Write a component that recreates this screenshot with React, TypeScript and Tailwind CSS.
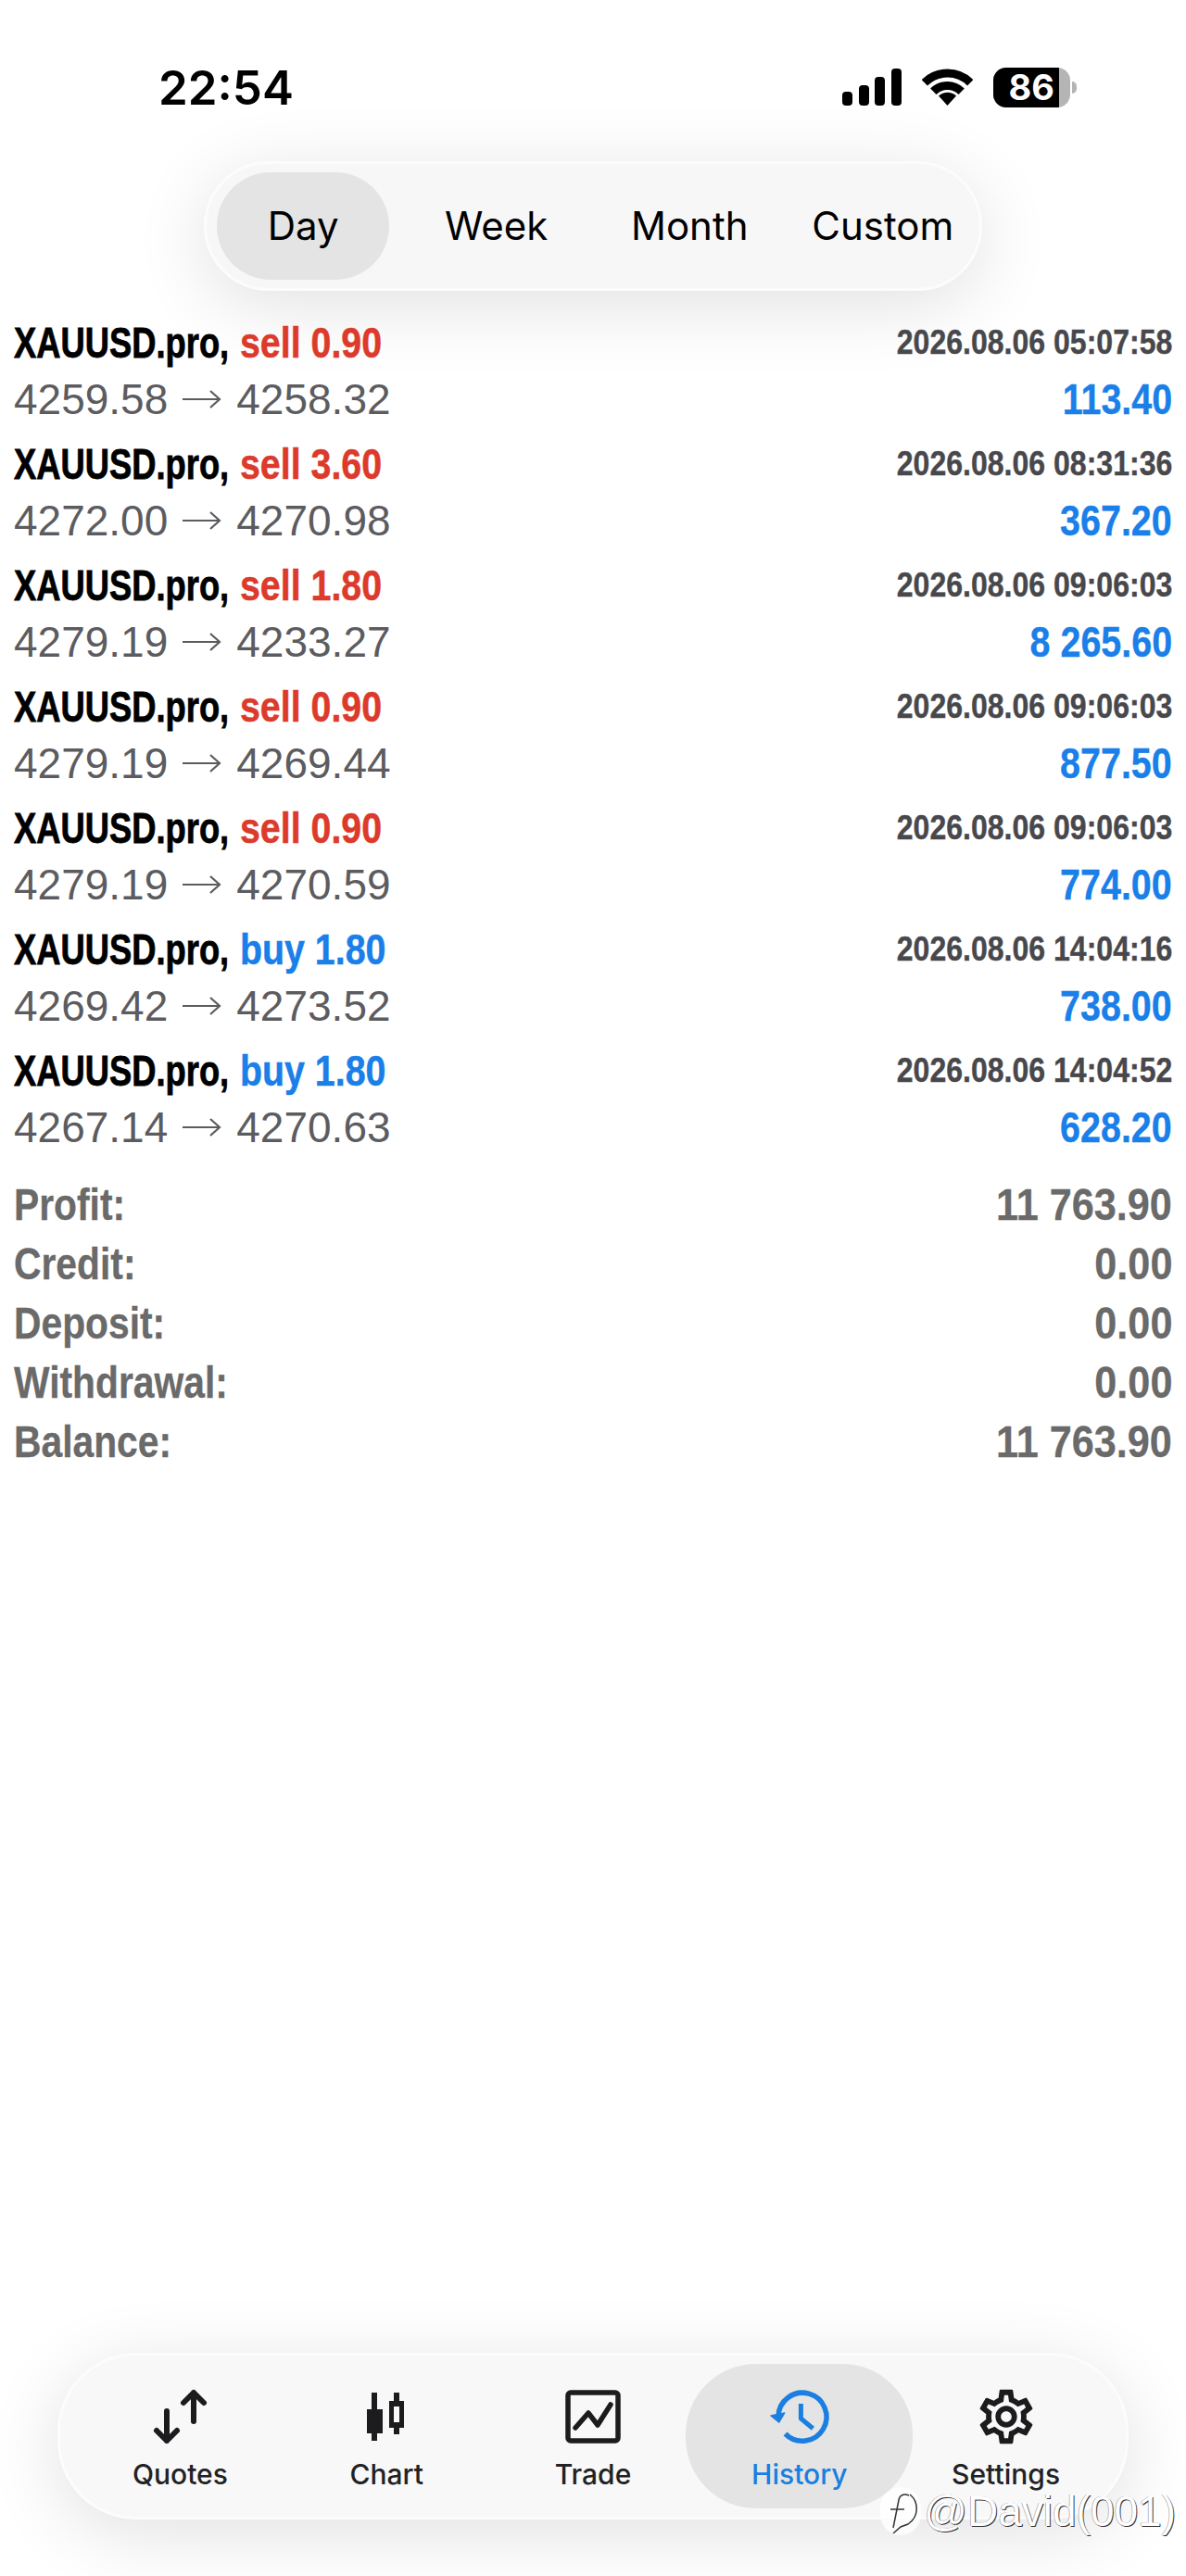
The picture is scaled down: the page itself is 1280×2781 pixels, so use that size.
import { MdOutlineSettings } from "react-icons/md";

const trades = [
  { side: "sell", lots: "0.90", from: "4259.58", to: "4258.32", time: "2026.08.06 05:07:58", profit: "113.40" },
  { side: "sell", lots: "3.60", from: "4272.00", to: "4270.98", time: "2026.08.06 08:31:36", profit: "367.20" },
  { side: "sell", lots: "1.80", from: "4279.19", to: "4233.27", time: "2026.08.06 09:06:03", profit: "8 265.60" },
  { side: "sell", lots: "0.90", from: "4279.19", to: "4269.44", time: "2026.08.06 09:06:03", profit: "877.50" },
  { side: "sell", lots: "0.90", from: "4279.19", to: "4270.59", time: "2026.08.06 09:06:03", profit: "774.00" },
  { side: "buy", lots: "1.80", from: "4269.42", to: "4273.52", time: "2026.08.06 14:04:16", profit: "738.00" },
  { side: "buy", lots: "1.80", from: "4267.14", to: "4270.63", time: "2026.08.06 14:04:52", profit: "628.20" },
];

const summary = [
  { label: "Profit:", value: "11 763.90" },
  { label: "Credit:", value: "0.00" },
  { label: "Deposit:", value: "0.00" },
  { label: "Withdrawal:", value: "0.00" },
  { label: "Balance:", value: "11 763.90" },
];

const QuotesIcon = () => (
  <svg width="64" height="64" viewBox="0 0 64 64" fill="none" stroke="#1c1c1e" strokeWidth="6" strokeLinecap="round" strokeLinejoin="round">
    <path d="M18 26V58M7 47L18 58L29 47" />
    <path d="M47 6V37M36 17L47 6L58 17" />
  </svg>
);

const ChartIcon = () => (
  <svg width="64" height="64" viewBox="0 0 64 64" fill="#1c1c1e">
    <rect x="16" y="6" width="6" height="52" />
    <rect x="11" y="24" width="17" height="26" />
    <path d="M40 6h6v9h5v29h-5v7h-6v-7h-5V15h5zM40 21v17h6V21z" fillRule="evenodd" />
  </svg>
);

const TradeIcon = () => (
  <svg width="64" height="64" viewBox="0 0 64 64" fill="none" stroke="#1c1c1e" strokeWidth="5.5" strokeLinecap="round" strokeLinejoin="round">
    <rect x="5" y="6" width="54" height="52" rx="3" />
    <path d="M13 44L27 28L37 41L51 19" />
  </svg>
);

const HistoryIcon = () => (
  <svg width="70" height="66" viewBox="0 0 70 66" fill="none" stroke="#1a7fe0" strokeWidth="5.5" strokeLinejoin="round">
    <path d="M12 33A26 26 0 1 1 19.5 51.5" />
    <path d="M4 32L18.6 29L12.7 39Z" fill="#1a7fe0" strokeWidth="1.5" />
    <path d="M36.4 19V35L49.4 45.7" strokeWidth="5" />
  </svg>
);

const PriceArrow = () => (
  <svg width="42" height="24" viewBox="0 0 42 24" fill="none" stroke="#5c5c60" strokeWidth="2.2" className="mx-[16px] shrink-0">
    <path d="M0 12H40M30 3L40 12L30 21" />
  </svg>
);

const tabs = [
  { label: "Quotes", icon: <QuotesIcon /> },
  { label: "Chart", icon: <ChartIcon /> },
  { label: "Trade", icon: <TradeIcon /> },
  { label: "History", icon: <HistoryIcon />, active: true },
  { label: "Settings", icon: <MdOutlineSettings size={70} color="#1c1c1e" /> },
];

const StatusIcons = () => (
  <div className="flex items-center gap-[22px]">
    <svg width="64" height="40" viewBox="0 0 64 40" fill="#000">
      <rect x="0" y="25" width="11" height="15" rx="4" />
      <rect x="18" y="18" width="11" height="22" rx="4" />
      <rect x="35" y="9" width="11" height="31" rx="4" />
      <rect x="53" y="0" width="11" height="40" rx="4" />
    </svg>
    <svg width="55" height="40" viewBox="0 0 55 40" fill="none" stroke="#000" strokeWidth="9">
      <path d="M2.8 15.3A35 35 0 0 1 52.2 15.3" />
      <path d="M12.3 24.8A21.5 21.5 0 0 1 42.7 24.8" />
      <path d="M27.5 40L18 29.5A14 14 0 0 1 37 29.5Z" fill="#000" stroke="none" />
    </svg>
    <div className="flex items-center gap-[2px]">
      <div className="flex h-[43px] w-[83px] overflow-hidden rounded-[14px] bg-[#b5b5b5]">
        <div className="flex h-full w-[71px] items-center justify-end bg-black pr-[5px] font-['Inter',sans-serif] text-[38px] font-bold leading-none text-white">86</div>
      </div>
      <div className="h-[13px] w-[5px] rounded-r-full bg-[#b5b5b5]" />
    </div>
  </div>
);

export default function App() {
  return (
    <div className="relative flex h-[2781px] w-[1280px] flex-col overflow-hidden bg-white font-['Liberation_Sans',sans-serif]">
      <div className="mt-[64px] flex h-[60px] items-center justify-between pl-[171px] pr-[118px]">
        <span className="font-['Inter',sans-serif] text-[51px] font-semibold leading-none text-black">22:54</span>
        <StatusIcons />
      </div>

      <div className="mx-auto mt-[50px] grid h-[140px] w-[840px] grid-cols-4 items-center rounded-[70px] border-[3px] border-[#fcfcfc] bg-[#f7f7f7] shadow-[0_15px_80px_rgba(0,0,0,0.12)]">
        {["Day", "Week", "Month", "Custom"].map((label, i) => (
          <div
            key={label}
            className={`flex h-[116px] w-[186px] items-center justify-center justify-self-center rounded-[58px] font-['Inter',sans-serif] text-[42px] leading-none text-black ${i === 0 ? "bg-[#e4e4e4]" : ""}`}
          >
            {label}
          </div>
        ))}
      </div>

      <div className="mt-[24px] flex flex-col pl-[15px] pr-[15px]">
        {trades.map((t, i) => (
          <div key={i} className="mb-[8px] flex flex-col">
            <div className="flex h-[63px] items-center justify-between">
              <div className="flex items-center">
                <span className="inline-block w-[244px] origin-left scale-x-[0.79] whitespace-nowrap text-[46px] font-bold leading-none text-black [-webkit-text-stroke:0.8px_currentColor]">XAUUSD.pro,</span>
                <span className={`inline-block origin-left scale-x-[0.855] whitespace-nowrap text-[46px] font-bold leading-none [-webkit-text-stroke:0.5px_currentColor] ${t.side === "sell" ? "text-[#dc3a2b]" : "text-[#1a7fe8]"}`}>
                  {t.side} {t.lots}
                </span>
              </div>
              <span className="inline-block origin-right scale-x-[0.89] whitespace-nowrap text-[36px] font-bold leading-none text-[#48484c] [-webkit-text-stroke:0.4px_currentColor]">{t.time}</span>
            </div>
            <div className="flex h-[60px] items-center justify-between">
              <div className="flex items-center whitespace-nowrap text-[46px] leading-none text-[#5c5c60]">
                <span>{t.from}</span>
                <PriceArrow />
                <span>{t.to}</span>
              </div>
              <span className="inline-block origin-right scale-x-[0.857] whitespace-nowrap text-[46px] font-bold leading-none text-[#1a7fe8] [-webkit-text-stroke:0.4px_currentColor]">{t.profit}</span>
            </div>
          </div>
        ))}
      </div>

      <div className="mt-[14px] flex flex-col pl-[15px] pr-[15px]">
        {summary.map((s) => (
          <div key={s.label} className="flex h-[64px] items-center justify-between text-[48px] font-bold leading-none text-[#6a6a6a]">
            <span className="inline-block origin-left scale-x-[0.85] whitespace-nowrap [-webkit-text-stroke:0.3px_currentColor]">{s.label}</span>
            <span className="inline-block origin-right scale-x-[0.9] whitespace-nowrap [-webkit-text-stroke:0.3px_currentColor]">{s.value}</span>
          </div>
        ))}
      </div>

      <div className="mx-auto mb-[61px] mt-auto grid h-[180px] w-[1156px] grid-cols-5 items-center rounded-[85px] border-[3px] border-[#fcfcfc] bg-[#f8f8f8] px-[18px] shadow-[0_15px_80px_rgba(0,0,0,0.12)]">
        {tabs.map((tab) => (
          <div
            key={tab.label}
            className={`flex h-[156px] w-[245px] flex-col items-center justify-self-center rounded-[76px] pt-[25px] ${tab.active ? "bg-[#e4e4e4]" : ""}`}
          >
            <div className="flex h-[64px] items-center justify-center">{tab.icon}</div>
            <span className={`mt-[10px] font-['Inter',sans-serif] text-[30px] font-medium leading-[40px] ${tab.active ? "text-[#1a7fe0]" : "text-[#222224]"}`}>
              {tab.label}
            </span>
          </div>
        ))}
      </div>

      <div className="absolute bottom-[44px] right-[11px] flex items-center gap-[3px]">
        <svg width="44" height="52" viewBox="0 0 44 52" fill="none" stroke="#333" strokeWidth="1.5" className="rounded-full bg-white/80">
          <path d="M14 44L20 14C21 8 26 7 31 9" />
          <path d="M11 24H26" />
          <path d="M32 8C42 16 42 32 30 40L22 43L14 50" />
        </svg>
        <span className="whitespace-nowrap text-[46px] font-normal leading-none text-white [text-shadow:1px_1px_0_#333,-0.5px_-0.5px_0_#888]">@David(001)</span>
      </div>
    </div>
  );
}
